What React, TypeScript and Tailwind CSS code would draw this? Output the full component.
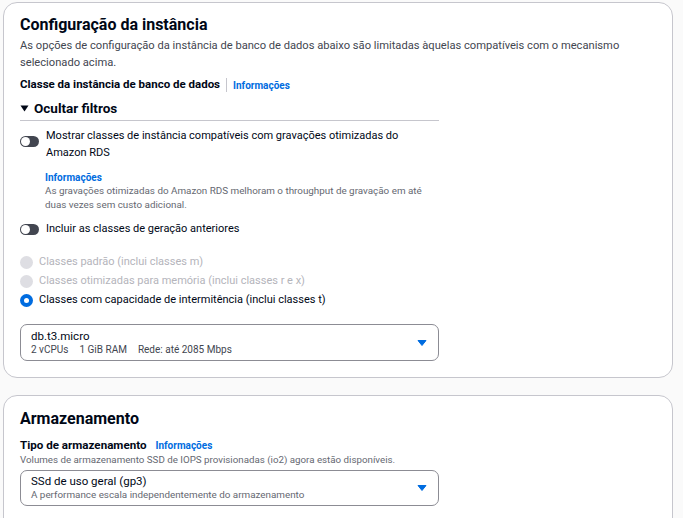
import React from "react";

const Toggle = () => (
  <span className="relative inline-block w-[19px] h-[11px] rounded-full bg-[#424650] shrink-0">
    <span className="absolute left-[1px] top-[1px] w-[9px] h-[9px] rounded-full bg-white" />
  </span>
);

const Caret = () => (
  <svg width="10" height="8" viewBox="0 0 10 8" className="shrink-0">
    <path d="M1 1.5 H9 L5 6.5 Z" fill="#006ce0" stroke="#006ce0" strokeWidth="1" strokeLinejoin="round" />
  </svg>
);

const RadioDisabled = () => (
  <span className="inline-block w-[13px] h-[13px] rounded-full bg-[#dedee3] shrink-0" />
);

const RadioChecked = () => (
  <span className="inline-flex items-center justify-center w-[13px] h-[13px] rounded-full bg-[#006ce0] shrink-0">
    <span className="w-[5px] h-[5px] rounded-full bg-white" />
  </span>
);

export default function App() {
  return (
    <div
      className="w-[683px] h-[518px] overflow-hidden bg-[#fafafa] text-[#000716] pl-[3px] pr-[10px] pt-[2px]"
      style={{ fontFamily: 'Roboto, "Noto Sans", sans-serif' }}
    >
      <div className="bg-white border border-[#c6c6cd] rounded-[14px] pl-[16px] pr-[16px] pt-[10px] pb-[16px]">
        <h2 className="text-[16px] font-bold leading-[24px]">Configuração da instância</h2>
        <p className="text-[11.15px] leading-[17px] text-[#424650]">
          As opções de configuração da instância de banco de dados abaixo são limitadas àquelas compatíveis com o mecanismo selecionado acima.
        </p>
        <div className="flex items-center mt-[5px] h-[18px]">
          <span className="text-[11.5px] font-bold">Classe da instância de banco de dados</span>
          <span className="w-px h-[14px] bg-[#c6c6cd] ml-[6px] mr-[6px]" />
          <span className="text-[10px] font-bold text-[#006ce0]">Informações</span>
        </div>
        <div className="w-[419px]">
          <div className="flex items-center gap-[5px] mt-[4px] h-[20px]">
            <svg width="9" height="7" viewBox="0 0 9 7"><path d="M0.5 0.5 H8.5 L4.5 6.5 Z" fill="#000716" /></svg>
            <span className="text-[13.5px] font-bold">Ocultar filtros</span>
          </div>
          <div className="border-t border-[#c6c6cd] mt-[2px]" />
          <div className="flex items-start gap-[7px] mt-[6px]">
            <div className="pt-[3px]"><Toggle /></div>
            <div className="text-[11px] leading-[17px]">
              Mostrar classes de instância compatíveis com gravações otimizadas do Amazon RDS
            </div>
          </div>
          <div className="pl-[25px] mt-[10px]">
            <div className="text-[10px] font-bold text-[#006ce0] leading-[13px]">Informações</div>
            <div className="text-[9.85px] leading-[14px] text-[#656871]">
              As gravações otimizadas do Amazon RDS melhoram o throughput de gravação em até duas vezes sem custo adicional.
            </div>
          </div>
          <div className="flex items-center gap-[7px] mt-[8px] h-[18px]">
            <Toggle />
            <span className="text-[11px]">Incluir as classes de geração anteriores</span>
          </div>
          <div className="flex flex-col mt-[15px] gap-[1px]">
            <div className="flex items-center gap-[6px] h-[18px]">
              <RadioDisabled />
              <span className="text-[11px] text-[#b4b4bb]">Classes padrão (inclui classes m)</span>
            </div>
            <div className="flex items-center gap-[6px] h-[18px]">
              <RadioDisabled />
              <span className="text-[11px] text-[#b4b4bb]">Classes otimizadas para memória (inclui classes r e x)</span>
            </div>
            <div className="flex items-center gap-[6px] h-[18px]">
              <RadioChecked />
              <span className="text-[11px]">Classes com capacidade de intermitência (inclui classes t)</span>
            </div>
          </div>
          <div className="mt-[15px] h-[37px] border border-[#8c8c94] rounded-[7px] flex items-center justify-between pl-[10px] pr-[11px]">
            <div className="flex flex-col">
              <span className="text-[11.5px] leading-[13px]">db.t3.micro</span>
              <span className="text-[10px] leading-[13px] text-[#424650]">
                2 vCPUs<span className="ml-[11px]">1 GiB RAM</span><span className="ml-[11px]">Rede: até 2085 Mbps</span>
              </span>
            </div>
            <Caret />
          </div>
        </div>
      </div>

      <div className="bg-white border border-[#c6c6cd] rounded-[14px] pl-[16px] pr-[16px] pt-[11px] pb-[16px] mt-[17px] h-[200px]">
        <h2 className="text-[16px] font-bold leading-[24px]">Armazenamento</h2>
        <div className="flex items-center gap-[9px] mt-[7px] h-[15px]">
          <span className="text-[11.6px] font-bold">Tipo de armazenamento</span>
          <span className="text-[10px] font-bold text-[#006ce0]">Informações</span>
        </div>
        <div className="text-[9.75px] leading-[13px] text-[#656871]">
          Volumes de armazenamento SSD de IOPS provisionadas (io2) agora estão disponíveis.
        </div>
        <div className="w-[419px] mt-[4px] h-[36px] border border-[#8c8c94] rounded-[7px] flex items-center justify-between pl-[10px] pr-[11px]">
          <div className="flex flex-col">
            <span className="text-[11.5px] leading-[13px]">SSd de uso geral (gp3)</span>
            <span className="text-[9.85px] leading-[13px] text-[#656871]">A performance escala independentemente do armazenamento</span>
          </div>
          <Caret />
        </div>
      </div>
    </div>
  );
}
